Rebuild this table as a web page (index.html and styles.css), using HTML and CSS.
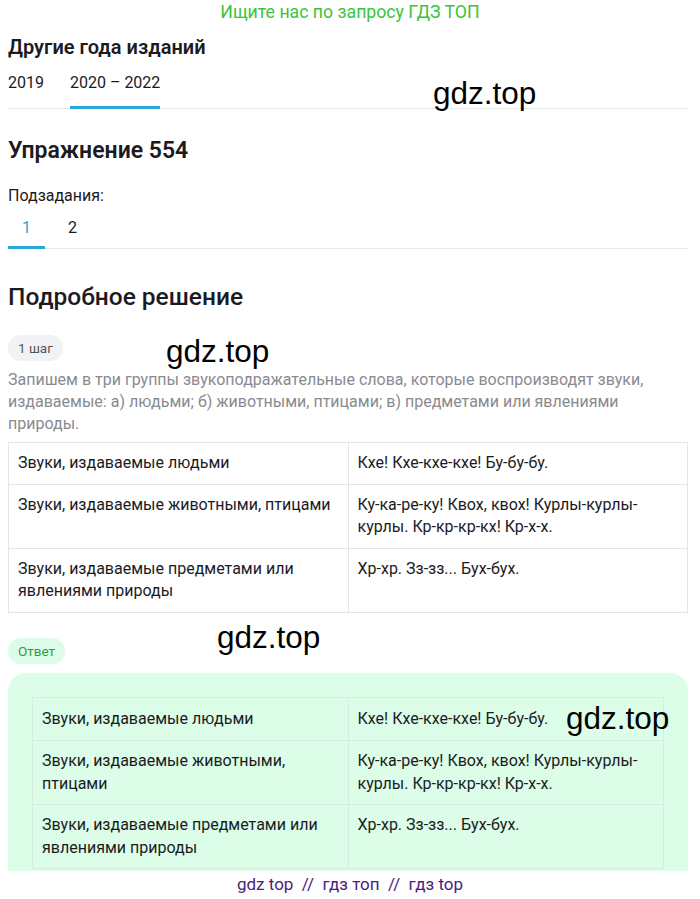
FILE: index.html
```html
<!DOCTYPE html>
<html lang="ru">
<head>
<meta charset="utf-8">
<link rel="stylesheet" href="styles.css">
</head>
<body>
<div class="page">
  <div class="promo">Ищите нас по запросу ГДЗ ТОП</div>

  <h2 class="section-title">Другие года изданий</h2>
  <div class="tabs years">
    <span class="tab">2019</span>
    <span class="tab active">2020 – 2022</span>
  </div>

  <h1 class="exercise">Упражнение 554</h1>
  <div class="sub-label">Подзадания:</div>
  <div class="tabs subs">
    <span class="tab active num">1</span>
    <span class="tab num">2</span>
  </div>

  <h2 class="solution-title">Подробное решение</h2>
  <span class="pill step">1 шаг</span>
  <p class="desc">Запишем в три группы звукоподражательные слова, которые воспроизводят звуки, издаваемые: а) людьми; б) животными, птицами; в) предметами или явлениями природы.</p>

  <table class="grid">
    <tr><td>Звуки, издаваемые людьми</td><td>Кхе! Кхе-кхе-кхе! Бу-бу-бу.</td></tr>
    <tr><td>Звуки, издаваемые животными, птицами</td><td>Ку-ка-ре-ку! Квох, квох! Курлы-курлы-курлы. Кр-кр-кр-кх! Кр-х-х.</td></tr>
    <tr><td>Звуки, издаваемые предметами или явлениями природы</td><td>Хр-хр. Зз-зз... Бух-бух.</td></tr>
  </table>

  <span class="pill answer">Ответ</span>
  <div class="answer-box">
    <table class="grid inner">
      <tr><td>Звуки, издаваемые людьми</td><td>Кхе! Кхе-кхе-кхе! Бу-бу-бу.</td></tr>
      <tr><td>Звуки, издаваемые животными, птицами</td><td>Ку-ка-ре-ку! Квох, квох! Курлы-курлы-курлы. Кр-кр-кр-кх! Кр-х-х.</td></tr>
      <tr><td>Звуки, издаваемые предметами или явлениями природы</td><td>Хр-хр. Зз-зз... Бух-бух.</td></tr>
    </table>
  </div>

  <div class="footer">gdz top &nbsp;//&nbsp; гдз топ &nbsp;//&nbsp; гдз top</div>

  <span class="wm wm1">gdz.top</span>
  <span class="wm wm2">gdz.top</span>
  <span class="wm wm3">gdz.top</span>
  <span class="wm wm4">gdz.top</span>
</div>
</body>
</html>
```

FILE: styles.css
```css
* { box-sizing: border-box; }
html, body { margin: 0; padding: 0; background: #fff; }
body {
  font-family: Roboto, "Noto Sans", sans-serif;
  color: #1b1b1f;
  font-size: 16px;
}
.page {
  position: relative;
  width: 680px;
  margin-left: 8px;
  overflow: hidden;
  height: 899px;
}
.promo {
  text-align: center;
  color: #3ac43c;
  font-size: 17.7px;
  line-height: 24px;
  margin-left: -8px;
  width: 700px;
}
.section-title {
  margin: 11px 0 0;
  font-size: 20px;
  font-weight: 600;
  line-height: 24px;
}
.tabs {
  display: flex;
  gap: 26px;
  border-bottom: 1px solid #e6e7ea;
}
.years { margin-top: 12px; }
.tab {
  font-size: 16px;
  line-height: 24px;
  padding-bottom: 11px;
  border-bottom: 3px solid transparent;
  margin-bottom: -1px;
}
.tab.active { border-bottom-color: #29a8d8; }
.subs .tab.active { color: #2a9fd0; }
.subs { gap: 0; margin-top: 8px; }
.subs .tab { padding-bottom: 6px; }
.subs .num { width: 37px; text-align: center; }
.subs .num + .num { width: 55px; }
.exercise {
  margin: 28px 0 0;
  font-size: 23px;
  font-weight: 600;
  line-height: 28px;
}
.sub-label {
  margin-top: 19px;
  font-size: 16px;
  line-height: 24px;
}
.solution-title {
  margin: 34px 0 0;
  font-size: 24.5px;
  font-weight: 500;
  line-height: 28px;
}
.pill {
  display: inline-block;
  height: 26px;
  line-height: 26px;
  padding: 0 10px;
  border-radius: 13px;
  font-size: 13.5px;
}
.step {
  margin-top: 24px;
  background: #f1f2f4;
  color: #555;
}
.desc {
  margin: 8px 0 0;
  color: #8a8a8f;
  font-size: 16px;
  line-height: 22px;
}
.grid {
  border-collapse: collapse;
  width: 100%;
  margin-top: 7px;
  font-size: 16px;
  line-height: 22.5px;
}
.grid td {
  border: 1px solid #e4e5e8;
  vertical-align: top;
  padding: 9px 9px 9px;
  width: 50%;
}
.grid tr td:first-child { width: 340px; }
.answer {
  margin-top: 25px;
  background: #dcfce7;
  color: #2d9b4d;
}
.answer-box {
  margin-top: 9px;
  background: #dcfde7;
  border-radius: 18px 18px 0 0;
  padding: 24px 24px 3px;
  height: 198px;
}
.grid.inner { margin-top: 0; }
.grid.inner td { border-color: #d7eedf; }
.grid.inner tr:first-child td { padding-top: 10px; padding-bottom: 10px; }
.grid.inner tr td:first-child { width: 316px; }
.footer {
  text-align: center;
  color: #4b1d7f;
  font-size: 17px;
  line-height: 24px;
  padding-top: 1px;
  margin-left: -8px;
  width: 700px;
}
.wm {
  position: absolute;
  font-family: "Liberation Sans", Arial, sans-serif;
  font-size: 31.5px;
  color: #000;
  line-height: 36px;
}
.wm1 { left: 425px; top: 75px; }
.wm2 { left: 158px; top: 333px; }
.wm3 { left: 209px; top: 619px; }
.wm4 { left: 558px; top: 700px; }
```
